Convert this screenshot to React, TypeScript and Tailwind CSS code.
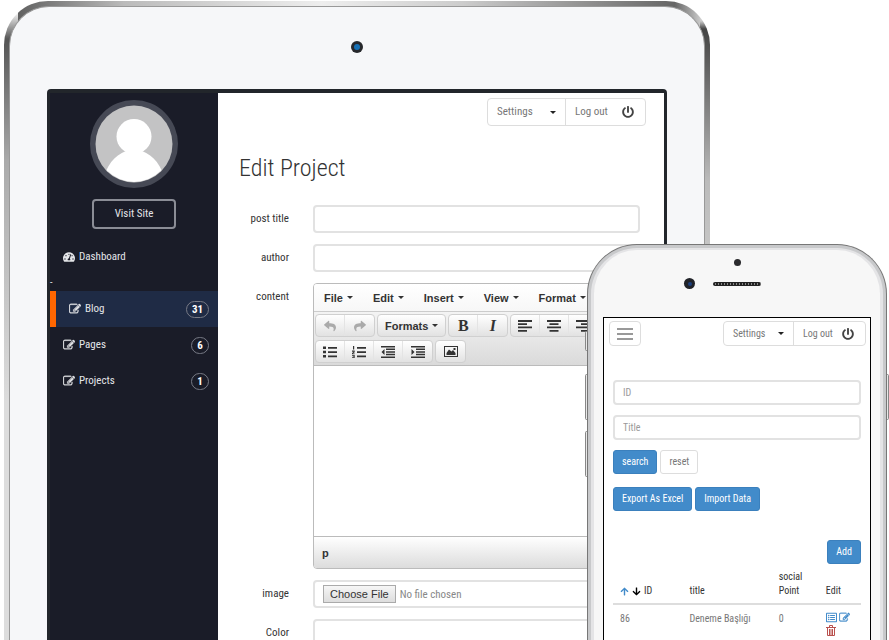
import React from "react";
import {
  FaArrowDown,
  FaArrowUp,
  FaPowerOff,
  FaRegListAlt,
  FaReply,
  FaShare,
  FaTachometerAlt,
} from "react-icons/fa";

const narrow = "font-['Liberation_Sans_Narrow','Roboto_Condensed','Liberation_Sans',sans-serif]";

function Caret() {
  return (
    <svg viewBox="0 0 6 3" className="h-[3px] w-1.5 shrink-0 fill-current" aria-hidden="true">
      <path d="M0 0h6L3 3z" />
    </svg>
  );
}

function EditIcon({ className }: { className?: string }) {
  return (
    <svg
      viewBox="0 0 1792 1792"
      className={className}
      fill="currentColor"
      stroke="currentColor"
      strokeWidth="50"
      aria-hidden="true"
    >
      <path d="M888 1184l116-116-152-152-116 116v56h96v96h56zm440-720q-16-16-33 1l-350 350q-17 17-1 33t33-1l350-350q17-17 1-33zm80 594v190q0 119-84.5 203.5t-203.5 84.5h-832q-119 0-203.5-84.5t-84.5-203.5v-832q0-119 84.5-203.5t203.5-84.5h832q63 0 117 25 15 7 18 23 3 17-9 29l-49 49q-14 14-32 8-23-6-45-6h-832q-66 0-113 47t-47 113v832q0 66 47 113t113 47h832q66 0 113-47t47-113v-126q0-13 9-22l64-64q15-15 35-7t20 29zm-96-738l288 288-672 672h-288v-288zm444 132l-92 92-288-288 92-92q28-28 68-28t68 28l152 152q28 28 28 68t-28 68z" />
    </svg>
  );
}

function TrashIcon() {
  return (
    <svg viewBox="0 0 10 11" className="h-[11px] w-2.5" fill="none" stroke="#b9504d" aria-hidden="true">
      <path d="M0 2.5h10M3.500 2V.5h3V2M1.500 3v7.500h7V3M3.500 4v6M5 4v6M6.500 4v6" />
    </svg>
  );
}

function ToolIcon({ d }: { d: string }) {
  return (
    <svg viewBox="0 0 14 12" className="h-3 w-3.5" fill="#333" aria-hidden="true">
      <path d={d} />
    </svg>
  );
}

const alignLeft = "M0 0h14v2H0zM0 3.300h9v1.700H0zM0 6.600h14v1.700H0zM0 10h9v1.700H0z";
const alignCenter = "M0 0h14v2H0zM2.500 3.300h9v1.700h-9zM0 6.600h14v1.700H0zM2.500 10h9v1.700h-9z";
const alignRight = "M0 0h14v2H0zM5 3.300h9v1.700H5zM0 6.600h14v1.700H0zM5 10h9v1.700H5z";
const justify = "M0 0h14v2H0zM0 3.300h14v1.700H0zM0 6.600h14v1.700H0zM0 10h14v1.700H0z";
const bullets =
  "M0 .5h3v2.500H0zM5 1h9v1.700H5zM0 4.800h3v2.500H0zM5 5.200h9v1.700H5zM0 9h3v2.500H0zM5 9.500h9v1.700H5z";
const numbers =
  "M1 0h1.200v3.500H1zM5 1h9v1.700H5zM0 4.500h2.700v1.700L1 7.500h1.700v.8H0V7l1.700-1.300H0zM5 5.200h9v1.700H5zM0 9h2.700v3H0v-.7h1.700v-.5H.7v-.6h1v-.5H0zM5 9.500h9v1.700H5z";
const outdent =
  "M0 0h14v1.500H0zM5 2.600h9v1.500H5zM5 5.200h9v1.500H5zM5 7.800h9v1.500H5zM0 10.400h14v1.500H0zM3.500 3v6L.5 6z";
const indent =
  "M0 0h14v1.500H0zM5 2.600h9v1.500H5zM5 5.200h9v1.500H5zM5 7.800h9v1.500H5zM0 10.400h14v1.500H0zM.5 3v6l3-3z";

function ToolGroup({ children }: { children: React.ReactNode }) {
  return (
    <div className="flex h-[23px] shrink-0 divide-x divide-[#e4e4e4] overflow-hidden rounded-sm border border-[#d0d0d0] bg-linear-to-b from-white to-[#e2e2e2]">
      {children}
    </div>
  );
}

function Tool({ label, children }: { label: string; children: React.ReactNode }) {
  return (
    <button type="button" aria-label={label} className="flex w-[29px] items-center justify-center text-[#333]">
      {children}
    </button>
  );
}

function AccountBar({ tall }: { tall?: boolean }) {
  return (
    <div
      className={
        "flex divide-x divide-[#ddd] rounded border border-[#ddd] bg-white leading-4 text-[#777] " +
        (tall ? "h-7 w-[159px] text-[11px]" : "h-[25px] w-[143px] text-[10px]")
      }
    >
      <button type="button" className="flex flex-1 items-center justify-between px-[9px]">
        Settings
        <span className="text-[#222]">
          <Caret />
        </span>
      </button>
      <button type="button" className="flex flex-1 items-center justify-between pr-[11px] pl-[9px]">
        Log out
        <FaPowerOff className="size-3 text-[#444]" />
      </button>
    </div>
  );
}

function NavItem({ label, count, active }: { label: string; count: number; active?: boolean }) {
  return (
    <a
      href="#"
      className={
        "flex h-9 items-center gap-1 pr-[9px] pl-[13px] " +
        (active ? "border-l-[6px] border-[#f60] bg-[#1f2b45]" : "")
      }
    >
      <EditIcon className="size-3" />
      <span className="flex-1">{label}</span>
      <span className="min-w-[18px] rounded-full border border-[#777a85] px-[5px] text-center leading-[15px] font-bold text-white">
        {count}
      </span>
    </a>
  );
}

function Field({ id, label, children }: { id: string; label: string; children: React.ReactNode }) {
  return (
    <div className="flex gap-6">
      <label htmlFor={id} className="w-[50px] shrink-0 text-right leading-7 text-[#333]">
        {label}
      </label>
      <div className="min-w-0 flex-1">{children}</div>
    </div>
  );
}

function Editor() {
  return (
    <div className="overflow-hidden rounded-sm border border-[#bbb] font-['Liberation_Sans',sans-serif] text-[11px] leading-4 font-bold text-[#333]">
      <div className="flex h-7 items-center overflow-hidden border-b border-[#ccc] bg-linear-to-b from-white to-[#f7f7f7]">
        {["File", "Edit", "Insert", "View", "Format"].map((m) => (
          <button key={m} type="button" className="flex shrink-0 items-center gap-1 px-2.5">
            {m}
            <Caret />
          </button>
        ))}
      </div>
      <div className="flex flex-col gap-[3px] border-b border-[#bbb] bg-linear-to-b from-[#f4f4f4] to-[#dadada] px-px pt-0.5 pb-0.5">
        <div className="flex gap-0.5">
          <ToolGroup>
            <Tool label="Undo">
              <FaReply className="size-3 text-[#aaa]" />
            </Tool>
            <Tool label="Redo">
              <FaShare className="size-3 text-[#aaa]" />
            </Tool>
          </ToolGroup>
          <ToolGroup>
            <button type="button" className="flex items-center gap-1 px-[7px]">
              Formats
              <Caret />
            </button>
          </ToolGroup>
          <ToolGroup>
            <Tool label="Bold">
              <span className="font-['Liberation_Serif',serif] text-base">B</span>
            </Tool>
            <Tool label="Italic">
              <span className="font-['Liberation_Serif',serif] text-base italic">I</span>
            </Tool>
          </ToolGroup>
          <ToolGroup>
            <Tool label="Align left">
              <ToolIcon d={alignLeft} />
            </Tool>
            <Tool label="Align center">
              <ToolIcon d={alignCenter} />
            </Tool>
            <Tool label="Align right">
              <ToolIcon d={alignRight} />
            </Tool>
            <Tool label="Justify">
              <ToolIcon d={justify} />
            </Tool>
          </ToolGroup>
        </div>
        <div className="flex gap-0.5">
          <ToolGroup>
            <Tool label="Bullet list">
              <ToolIcon d={bullets} />
            </Tool>
            <Tool label="Numbered list">
              <ToolIcon d={numbers} />
            </Tool>
            <Tool label="Decrease indent">
              <ToolIcon d={outdent} />
            </Tool>
            <Tool label="Increase indent">
              <ToolIcon d={indent} />
            </Tool>
          </ToolGroup>
          <ToolGroup>
            <Tool label="Insert image">
              <ToolIcon d="M0 0h14v11H0zM1 1v9h12V1zM2.500 9V7l2.500-3.500 2.500 2 1.500-1.500L11.500 7v2zM9.500 2h2v2h-2z" />
            </Tool>
          </ToolGroup>
        </div>
      </div>
      <textarea id="content" className="block h-[170px] w-full resize-none bg-white p-2 font-normal outline-none" />
      <div className="flex h-8 items-center border-t border-[#bbb] bg-linear-to-b from-white to-[#dcdcdc] px-2">
        p
      </div>
    </div>
  );
}

function Sidebar() {
  return (
    <aside className="w-[168px] shrink-0 bg-[#1a1c28] pt-[7px] text-[11px] leading-4 text-[#e4e5e8]">
      <svg viewBox="0 0 88 88" className="mx-auto size-[88px]" role="img" aria-label="User avatar">
        <clipPath id="face">
          <circle cx="44" cy="44" r="38" />
        </clipPath>
        <circle cx="44" cy="44" r="44" fill="#464955" />
        <circle cx="44" cy="44" r="38.500" fill="#c3c3c4" />
        <g clipPath="url(#face)" fill="#fff">
          <circle cx="44" cy="36.500" r="17.500" />
          <path d="M12 88c2-20 11-32 24-37h16c13 5 22 17 24 37z" />
        </g>
      </svg>
      <a
        href="#"
        className="mx-auto mt-[11px] flex h-[30px] w-[84px] items-center justify-center rounded-sm border-2 border-[#8b8d96]"
      >
        Visit Site
      </a>
      <nav>
        <a href="#" className="mt-2.5 flex h-9 items-center gap-1 pl-[13px]">
          <FaTachometerAlt className="size-3" />
          Dashboard
        </a>
        <div className="h-4 text-[10px]">-</div>
        <NavItem label="Blog" count={31} active />
        <NavItem label="Pages" count={6} />
        <NavItem label="Projects" count={1} />
      </nav>
    </aside>
  );
}

const box = "block h-7 w-full rounded border-2 border-[#e2e2e2] bg-white px-2 outline-none";

function Tablet() {
  return (
    <div className="h-full overflow-hidden pt-px pr-[179px] pl-1">
      <div className="min-h-full rounded-t-[44px] bg-[linear-gradient(#fff_10px,#555_38px,#aaa_160px,#ddd_400px),linear-gradient(#ccc_20px,#444_28px,#bbb_180px,#ddd_400px),linear-gradient(to_right,#555,#bbb_120px,#eee_45%,#ccc_65%,#666_95%,#eee)] bg-[size:14px_100%,10px_100%,100%_100%] bg-[position:left,right,center] bg-no-repeat p-[5px]">
        <div className="rounded-t-[40px] border-x border-t border-[#999] bg-[#f6f7f9] px-[37px] pt-[34px]">
          <div className="mx-auto flex size-3 items-center justify-center rounded-full bg-[#26282c]">
            <div className="size-1.5 rounded-full bg-[#1670b5]" />
          </div>
          <div className="mt-9 flex min-h-[560px] rounded-t border-x-[3px] border-t-4 border-[#22262b] bg-white">
            <Sidebar />
            <main className="min-w-0 flex-1 pt-[5px] pr-6 pl-[21px] text-[11px]">
              <div className="-mr-1.5 flex justify-end">
                <AccountBar tall />
              </div>
              <h1 className="mt-[26px] text-2xl leading-8 font-light text-[#333]">Edit Project</h1>
              <form className="mt-[21px] flex flex-col gap-[11px]">
                <Field id="post-title" label="post title">
                  <input id="post-title" className={box} />
                </Field>
                <Field id="author" label="author">
                  <input id="author" className={box} />
                </Field>
                <Field id="content" label="content">
                  <Editor />
                </Field>
                <Field id="image" label="image">
                  <input
                    id="image"
                    type="file"
                    className={
                      box +
                      " py-[3px] leading-[18px] text-[#888] file:mr-1 file:h-[18px] file:border file:border-solid file:border-[#aaa] file:bg-linear-to-b file:from-[#f6f6f6] file:to-[#ddd] file:px-1.5 file:font-['Liberation_Sans',sans-serif] file:text-[11px] file:leading-4 file:text-[#333]"
                    }
                  />
                </Field>
                <Field id="color" label="Color">
                  <input id="color" className={box} />
                </Field>
              </form>
            </main>
          </div>
        </div>
      </div>
    </div>
  );
}

const blue =
  "flex h-6 items-center rounded-[3px] bg-[#428bca] px-2 text-white border border-[#3b80bd] whitespace-nowrap";
const phoneBox =
  "block h-[25px] w-full rounded border-2 border-[#e2e2e2] px-2 text-[10px] outline-none placeholder:text-[#999]";
const sideKey = "absolute h-[46px] w-[3px] rounded-sm border border-[#888] bg-[#e8e8e8]";

function Phone() {
  return (
    <div className="absolute top-[244px] right-[2px] bottom-0 w-[300px]">
      <div className="absolute top-[87px] -left-0.5 h-5 w-[3px] rounded-sm border border-[#888] bg-[#e8e8e8]" />
      <div className={sideKey + " top-[130px] -left-0.5"} />
      <div className={sideKey + " top-[187px] -left-0.5"} />
      <div className={sideKey + " top-[130px] -right-0.5"} />
      <div className="relative h-full overflow-hidden rounded-t-[50px] border-x border-t border-[#777] bg-[#c8c9cb] px-[3px] pt-[3px]">
        <div className="min-h-full rounded-t-[46px] border-x-[3px] border-t-2 border-[#e4e4e6] bg-[#f7f7f7] px-[9px] pt-[9px]">
          <div className="mx-auto size-[7px] rounded-full bg-[#2b2b2e]" />
          <div className="mt-3 grid grid-cols-[1fr_48px_1fr] items-center">
            <div className="mr-[18px] flex size-[11px] items-center justify-center justify-self-end rounded-full bg-[#202228]">
              <div className="size-1 rounded-full bg-[#1d3f7c]" />
            </div>
            <div className="h-1 rounded-full border-y border-[#222] bg-[repeating-linear-gradient(90deg,#222_0px,#222_2px,#888_2px,#888_3px)]" />
          </div>
          <div className="mt-[28px] min-h-[340px] border-x border-t border-black bg-white text-[10px] leading-[14px]">
            <div className="flex justify-between pt-[3px] pr-1 pl-[5px]">
              <button
                type="button"
                aria-label="Menu"
                className="flex h-[25px] w-8 flex-col items-center justify-center gap-[3px] rounded border border-[#ddd]"
              >
                <span className="h-0.5 w-4 bg-[#999]" />
                <span className="h-0.5 w-4 bg-[#999]" />
                <span className="h-0.5 w-4 bg-[#999]" />
              </button>
              <AccountBar />
            </div>
            <div className="px-[9px] pt-[34px]">
              <form>
                <input aria-label="ID" placeholder="ID" className={phoneBox} />
                <input aria-label="Title" placeholder="Title" className={phoneBox + " mt-2.5"} />
                <div className="mt-2.5 flex gap-[3px]">
                  <button type="button" className={blue}>
                    search
                  </button>
                  <button
                    type="button"
                    className="flex h-6 items-center rounded-[3px] border border-[#ddd] px-2 text-[#777]"
                  >
                    reset
                  </button>
                </div>
              </form>
              <div className="mt-[13px] flex gap-[3px]">
                <button type="button" className={blue}>
                  Export As Excel
                </button>
                <button type="button" className={blue}>
                  Import Data
                </button>
              </div>
              <div className="mt-[29px] flex justify-end">
                <button type="button" className={blue}>
                  Add
                </button>
              </div>
              <table className="mt-1.5 w-full table-fixed text-left text-[#333]">
                <colgroup>
                  <col className="w-[28%]" />
                  <col className="w-[36%]" />
                  <col className="w-[19%]" />
                  <col className="w-[17%]" />
                </colgroup>
                <thead>
                  <tr className="border-b-2 border-[#ddd] align-bottom">
                    <th className="px-[7px] pb-[5px] font-normal">
                      <span className="flex items-center gap-[3px]">
                        <FaArrowUp className="size-[9px] text-[#428bca]" />
                        <FaArrowDown className="size-[9px] text-black" />
                        ID
                      </span>
                    </th>
                    <th className="px-[7px] pb-[5px] font-normal">title</th>
                    <th className="px-[7px] pb-[5px] font-normal">social Point</th>
                    <th className="px-[7px] pb-[5px] font-normal">Edit</th>
                  </tr>
                </thead>
                <tbody>
                  <tr className="align-top text-[#777]">
                    <td className="px-[7px] pt-[7px]">86</td>
                    <td className="px-[7px] pt-[7px]">Deneme Başlığı</td>
                    <td className="px-[7px] pt-[7px]">0</td>
                    <td className="pt-[7px] pl-[7px]">
                      <span className="flex flex-wrap items-center gap-0.5">
                        <a href="#" aria-label="Details" className="text-[#428bca]">
                          <FaRegListAlt className="size-[11px]" />
                        </a>
                        <a href="#" aria-label="Edit row" className="text-[#428bca]">
                          <EditIcon className="size-[11px]" />
                        </a>
                        <a href="#" aria-label="Delete row">
                          <TrashIcon />
                        </a>
                      </span>
                    </td>
                  </tr>
                </tbody>
              </table>
            </div>
          </div>
        </div>
      </div>
    </div>
  );
}

export default function App() {
  return (
    <div className={"relative h-screen overflow-hidden bg-white " + narrow}>
      <Tablet />
      <Phone />
    </div>
  );
}
